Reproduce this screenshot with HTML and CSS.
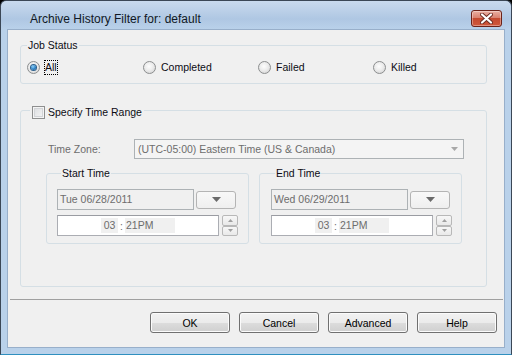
FILE: index.html
```html
<!DOCTYPE html>
<html lang="en">
<head>
    <meta charset="UTF-8">
    <meta name="viewport" content="width=device-width, initial-scale=1.0">
    <title>Archive History Filter</title>

    <link rel="stylesheet" href="styles.css">
</head>
<body>
    <div class="window">
        <div class="titlebar">
            <span class="title">Archive History Filter for: default</span>
            <span class="close">
                <svg width="13" height="11" viewBox="0 0 13 11">
                    <path d="M2 1.5l9 8M11 1.5l-9 8" stroke="#6a2b22" stroke-width="4" stroke-linecap="round"/>
                    <path d="M2 1.5l9 8M11 1.5l-9 8" stroke="#fff" stroke-width="2.2" stroke-linecap="round"/>
                </svg>
            </span>
        </div>

        <div class="client">
            <div class="group status">
                <div class="group-title">Job Status</div>
                <div class="radios">
                    <label class="opt"><span class="radio checked"></span><span class="opt-text focus">All</span></label>
                    <label class="opt"><span class="radio"></span><span class="opt-text">Completed</span></label>
                    <label class="opt"><span class="radio"></span><span class="opt-text">Failed</span></label>
                    <label class="opt"><span class="radio"></span><span class="opt-text">Killed</span></label>
                </div>
            </div>

            <div class="group range">
                <div class="group-title check-title"><span class="check"></span>Specify Time Range</div>

                <div class="tz-row">
                    <span class="tz-label">Time Zone:</span>
                    <div class="combo">
                        <span>(UTC-05:00) Eastern Time (US &amp; Canada)</span>
                        <svg width="7" height="4" viewBox="0 0 7 4"><path d="M0 0h7L3.5 4z" fill="#a8a8a8"/></svg>
                    </div>
                </div>

                <div class="times">
                    <div class="group time-group">
                        <div class="group-title">Start Time</div>
                        <div class="date-row">
                            <div class="date-field">Tue 06/28/2011</div>
                            <div class="drop-btn"><svg width="9" height="5" viewBox="0 0 9 5"><path d="M0 0h9L4.5 5z" fill="#6a6a6a"/></svg></div>
                        </div>
                        <div class="time-row">
                            <div class="time-field">
                                <span class="seg">03</span><span class="colon">:</span><span class="seg wide">21PM</span>
                            </div>
                            <div class="spin">
                                <span class="spin-btn"><svg width="5" height="3" viewBox="0 0 5 3"><path d="M0 3h5L2.5 0z" fill="#a0a0a0"/></svg></span>
                                <span class="spin-btn"><svg width="5" height="3" viewBox="0 0 5 3"><path d="M0 0h5L2.5 3z" fill="#a0a0a0"/></svg></span>
                            </div>
                        </div>
                    </div>

                    <div class="group time-group end">
                        <div class="group-title">End Time</div>
                        <div class="date-row">
                            <div class="date-field">Wed 06/29/2011</div>
                            <div class="drop-btn"><svg width="9" height="5" viewBox="0 0 9 5"><path d="M0 0h9L4.5 5z" fill="#6a6a6a"/></svg></div>
                        </div>
                        <div class="time-row">
                            <div class="time-field">
                                <span class="seg">03</span><span class="colon">:</span><span class="seg wide">21PM</span>
                            </div>
                            <div class="spin">
                                <span class="spin-btn"><svg width="5" height="3" viewBox="0 0 5 3"><path d="M0 3h5L2.5 0z" fill="#a0a0a0"/></svg></span>
                                <span class="spin-btn"><svg width="5" height="3" viewBox="0 0 5 3"><path d="M0 0h5L2.5 3z" fill="#a0a0a0"/></svg></span>
                            </div>
                        </div>
                    </div>
                </div>
            </div>

            <div class="separator"></div>

            <div class="buttons">
                <button class="btn">OK</button>
                <button class="btn">Cancel</button>
                <button class="btn">Advanced</button>
                <button class="btn">Help</button>
            </div>
        </div>
    </div>
</body>
</html>
```

FILE: styles.css
```css
* {
    margin: 0;
    padding: 0;
    box-sizing: border-box;
}

body {
    background-color: #000;
    font-family: "Liberation Sans", Arial, sans-serif;
    font-size: 10.5px;
    color: #0c0c14;
}

.window {
    width: 512px;
    height: 355px;
    display: flex;
    flex-direction: column;
    padding: 0 6px 6px;
    border: solid 1px #3b4756;
    border-bottom-color: #2f8fbf;
    border-radius: 6px 6px 0 0;
    background: linear-gradient(#c9daee, #afc7e3 18px, #b9d1ea 28px);
}

/* title bar */
.titlebar {
    height: 28px;
    display: flex;
    justify-content: space-between;
    align-items: flex-start;
}

.titlebar .title {
    margin: 10px 0 0 23px;
    font-size: 12px;
    line-height: 16px;
    color: #101824;
}

.titlebar .close {
    width: 31px;
    height: 17px;
    margin: 9px 3px 0 0;
    display: flex;
    align-items: center;
    justify-content: center;
    border: solid 1px #6b2219;
    border-radius: 3px;
    background: linear-gradient(#eab0a3, #d98270 45%, #c44a30 50%, #d0583c);
    box-shadow: inset 0 0 0 1px rgba(255, 255, 255, 0.35);
}

/* client area */
.client {
    flex: 1;
    border: solid 1px #98afca;
    background-color: #f0f0f0;
}

.group {
    border: solid 1px #d5dfe5;
    border-radius: 3px;
}

.group-title {
    width: fit-content;
    height: 13px;
    line-height: 13px;
    margin: -7px 0 0 6px;
    padding: 0 1px;
    background-color: #f0f0f0;
}

.status {
    margin: 15px 17px 0 12px;
    padding-bottom: 9px;
}

.status .radios {
    margin-top: 9px;
    padding-left: 6px;
    display: grid;
    grid-template-columns: 116px 115px 115px auto;
}

.opt {
    height: 13px;
    display: flex;
    align-items: center;
}

.radio {
    width: 13px;
    height: 13px;
    margin-right: 4px;
    display: flex;
    align-items: center;
    justify-content: center;
    border: solid 1px #8c8e8f;
    border-radius: 50%;
    background: radial-gradient(circle at 45% 40%, #fdfdfd 0, #ececec 45%, #cdcdcd 100%);
}

.radio.checked::after {
    content: "";
    width: 5px;
    height: 5px;
    border-radius: 50%;
    background: radial-gradient(circle at 40% 35%, #8fd2fa 0, #2a7fc4 55%, #124e86 100%);
    box-shadow: 0 0 0 1px #2b5f8c;
}

.opt-text {
    line-height: 13px;
    border: solid 1px transparent;
}

.opt-text.focus {
    border: dotted 1px #000;
}

/* time range */
.range {
    margin: 26px 17px 0 12px;
    padding-bottom: 42px;
}

.check-title {
    margin: -5px 0 0 9px;
    padding: 0 2px;
    display: flex;
    align-items: center;
}

.check {
    width: 13px;
    height: 13px;
    margin-right: 3px;
    border: solid 1px #8e8f8f;
    background: linear-gradient(135deg, #d9dbde, #f7f7f7);
    box-shadow: inset 0 0 0 1px #f4f4f4, inset 0 0 0 2px #d2d4d7;
}

.tz-row {
    margin-top: 20px;
    padding-left: 27px;
    display: flex;
    align-items: center;
}

.tz-label {
    width: 86px;
    color: #6d6d6d;
}

.combo {
    width: 330px;
    height: 20px;
    padding: 0 5px 0 3px;
    display: flex;
    align-items: center;
    justify-content: space-between;
    border: solid 1px #adb2b5;
    background-color: #f4f4f4;
    color: #6d6d6d;
}

.times {
    margin-top: 14px;
    padding-left: 25px;
    display: flex;
    gap: 10px;
}

.time-group {
    width: 203px;
    padding: 0 0 7px 10px;
}

.time-group.end {
    padding-left: 11px;
}

.time-group .group-title {
    margin-left: 4px;
}

.date-row {
    margin-top: 9px;
    display: flex;
    align-items: center;
}

.date-field {
    width: 137px;
    height: 21px;
    padding-left: 2px;
    line-height: 19px;
    border: solid 1px #adb2b5;
    background-color: #f0f0f0;
    color: #6d6d6d;
}

.drop-btn {
    width: 40px;
    height: 18px;
    margin-left: 2px;
    display: flex;
    align-items: center;
    justify-content: center;
    border: solid 1px #b4b4b4;
    border-radius: 3px;
    background: linear-gradient(#f8f8f8, #efefef);
}

.time-row {
    margin-top: 5px;
    display: flex;
}

.time-field {
    width: 162px;
    height: 21px;
    display: flex;
    align-items: center;
    justify-content: center;
    border: solid 1px #abadb3;
    border-top-color: #9a9ca2;
    background-color: #fff;
    color: #6d6d6d;
}

.seg {
    width: 17px;
    height: 15px;
    line-height: 15px;
    text-align: center;
    background-color: #f0f0f0;
}

.seg.wide {
    width: 50px;
    padding-left: 1px;
    text-align: left;
}

.colon {
    width: 7px;
    text-align: center;
}

.spin {
    width: 16px;
    height: 21px;
    margin-left: 3px;
    display: flex;
    flex-direction: column;
}

.spin-btn {
    flex: 1;
    display: flex;
    align-items: center;
    justify-content: center;
    border: solid 1px #b8b8b8;
    border-radius: 2px;
    background: linear-gradient(#f7f7f7, #e9e9e9);
}

/* footer */
.separator {
    margin: 12px 1px 0 2px;
    border-top: solid 1px #a0a0a0;
}

.buttons {
    margin-top: 12px;
    padding-right: 7px;
    display: flex;
    justify-content: flex-end;
    gap: 9px;
}

.btn {
    width: 80px;
    height: 21px;
    border: solid 1px #707070;
    border-radius: 3px;
    background: linear-gradient(#f2f2f2 0, #ebebeb 50%, #dddddd 50%, #cfcfcf 100%);
    box-shadow: inset 0 0 0 1px #fbfbfb;
    font-family: inherit;
    font-size: 10.5px;
    font-weight: normal;
    color: #000;
}
```
